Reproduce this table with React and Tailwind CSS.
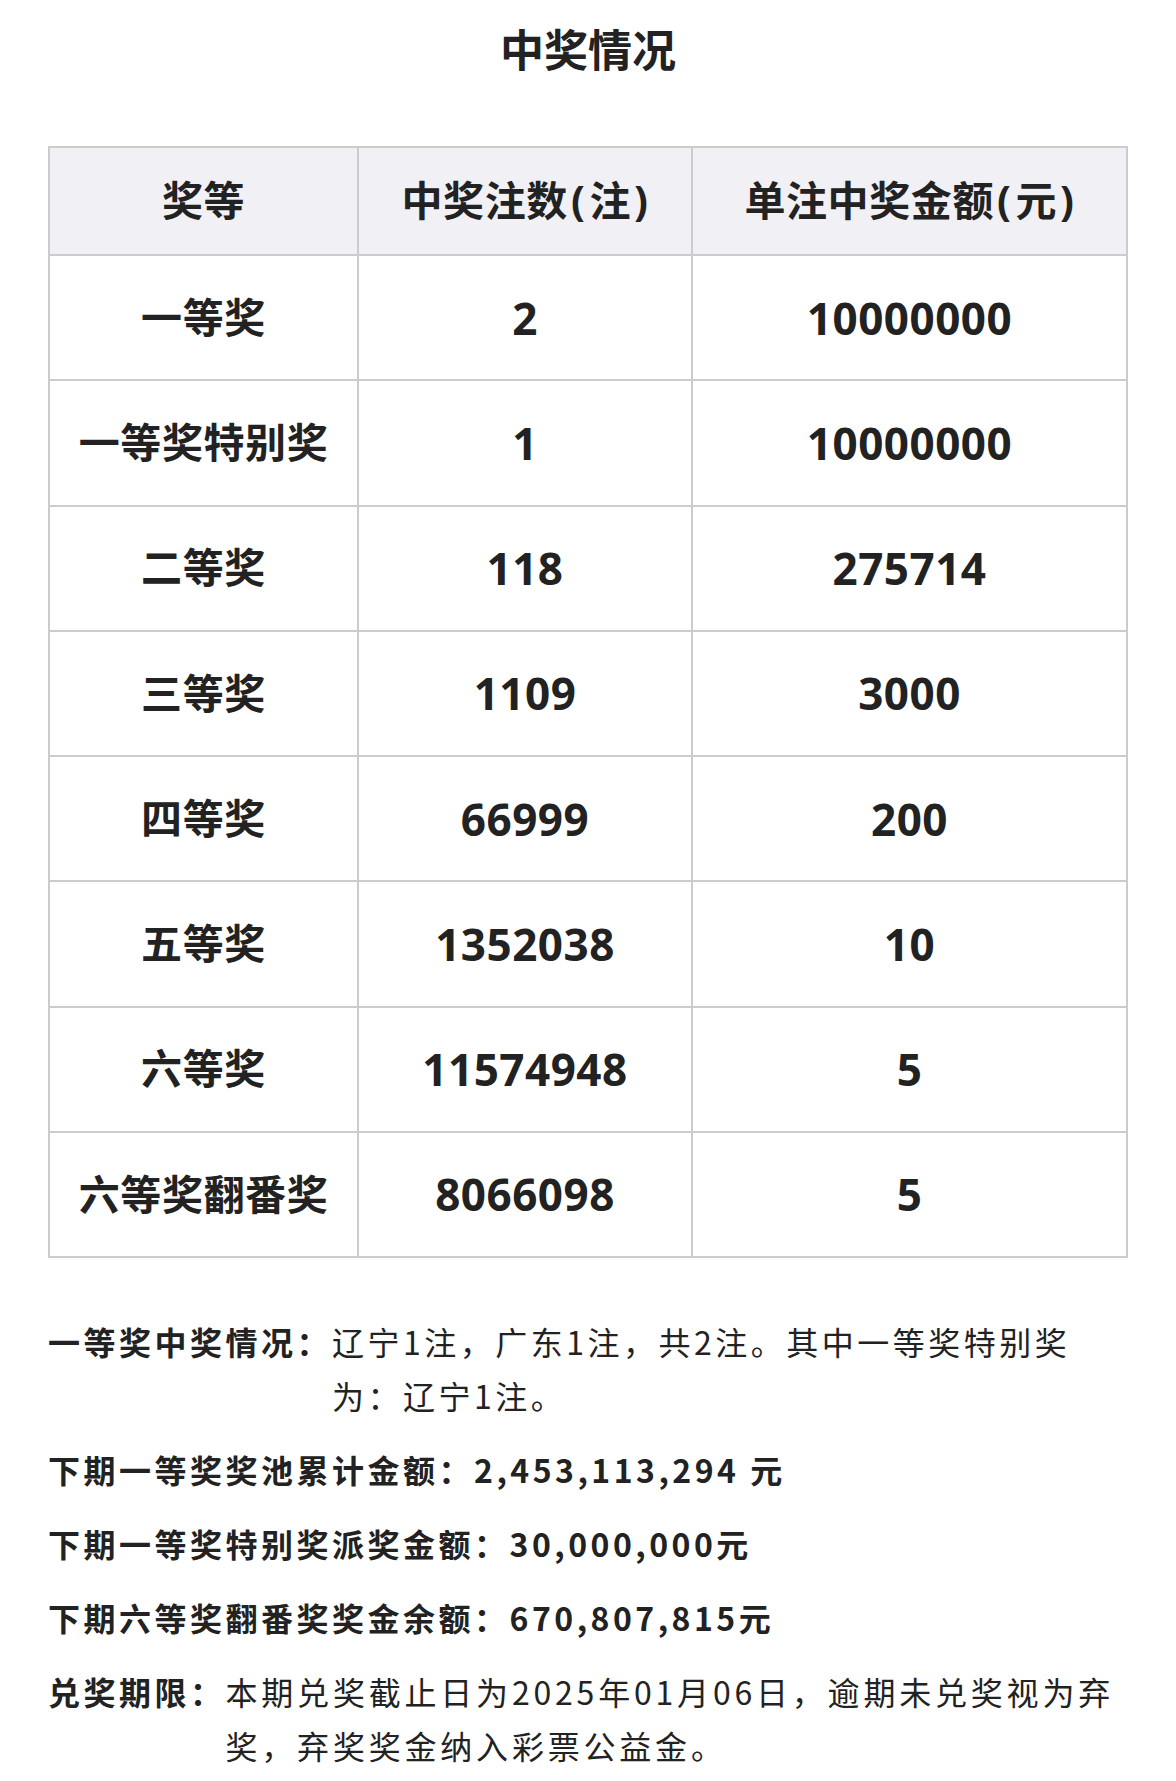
import React from "react";

const rows = [
  ["一等奖", "2", "10000000"],
  ["一等奖特别奖", "1", "10000000"],
  ["二等奖", "118", "275714"],
  ["三等奖", "1109", "3000"],
  ["四等奖", "66999", "200"],
  ["五等奖", "1352038", "10"],
  ["六等奖", "11574948", "5"],
  ["六等奖翻番奖", "8066098", "5"],
];

const font = { fontFamily: '"Noto Sans", "Noto Sans CJK SC", sans-serif' };

function Cell({ children, head, num }) {
  return (
    <div
      className={
        "flex items-center justify-center border-r-2 border-b-2 border-[#cccccc] font-bold text-[#222222] " +
        (num ? "text-[44px] tracking-[0.5px] " : "text-[41px] tracking-[0.6px] ") +
        (head ? "h-[108px] bg-[#f1f1f5]" : "h-[125.25px] bg-white")
      }
    >
      {children}
    </div>
  );
}

function Head({ a, b }) {
  return (
    <span className="whitespace-nowrap">
      {a}
      <span className="ml-[3px] mr-[4px]">(</span>
      {b}
      <span className="ml-[3px]">)</span>
    </span>
  );
}

export default function App() {
  return (
    <div className="w-[1176px] bg-white px-[48px] pb-[10px] text-[#222222]" style={font}>
      <div className="flex h-[100px] items-center justify-center text-[44px] font-bold leading-none">
        中奖情况
      </div>
      <div className="mt-[46px] grid grid-cols-[309px_334px_435px] border-l-2 border-t-2 border-[#cccccc]">
        <Cell head>奖等</Cell>
        <Cell head>
          <Head a="中奖注数" b="注" />
        </Cell>
        <Cell head>
          <Head a="单注中奖金额" b="元" />
        </Cell>
        {rows.map((r, i) => (
          <React.Fragment key={i}>
            <Cell>{r[0]}</Cell>
            <Cell num>{r[1]}</Cell>
            <Cell num>{r[2]}</Cell>
          </React.Fragment>
        ))}
      </div>
      <div
        className="mt-[56px] flex flex-col gap-[20px] text-[32px] leading-[54px] tracking-[3.5px]"
        style={{ fontFamily: '"Noto Sans CJK SC", sans-serif' }}
      >
        <div className="flex">
          <div className="shrink-0 font-bold">一等奖中奖情况：</div>
          <div className="flex-1 font-normal">辽宁1注，广东1注，共2注。其中一等奖特别奖为：辽宁1注。</div>
        </div>
        <div className="font-bold">下期一等奖奖池累计金额：2,453,113,294 元</div>
        <div className="font-bold">下期一等奖特别奖派奖金额：30,000,000元</div>
        <div className="font-bold">下期六等奖翻番奖奖金余额：670,807,815元</div>
        <div className="flex">
          <div className="shrink-0 font-bold">兑奖期限：</div>
          <div className="flex-1 font-normal tracking-[3.8px]">本期兑奖截止日为2025年01月06日，逾期未兑奖视为弃奖，弃奖奖金纳入彩票公益金。</div>
        </div>
      </div>
    </div>
  );
}
